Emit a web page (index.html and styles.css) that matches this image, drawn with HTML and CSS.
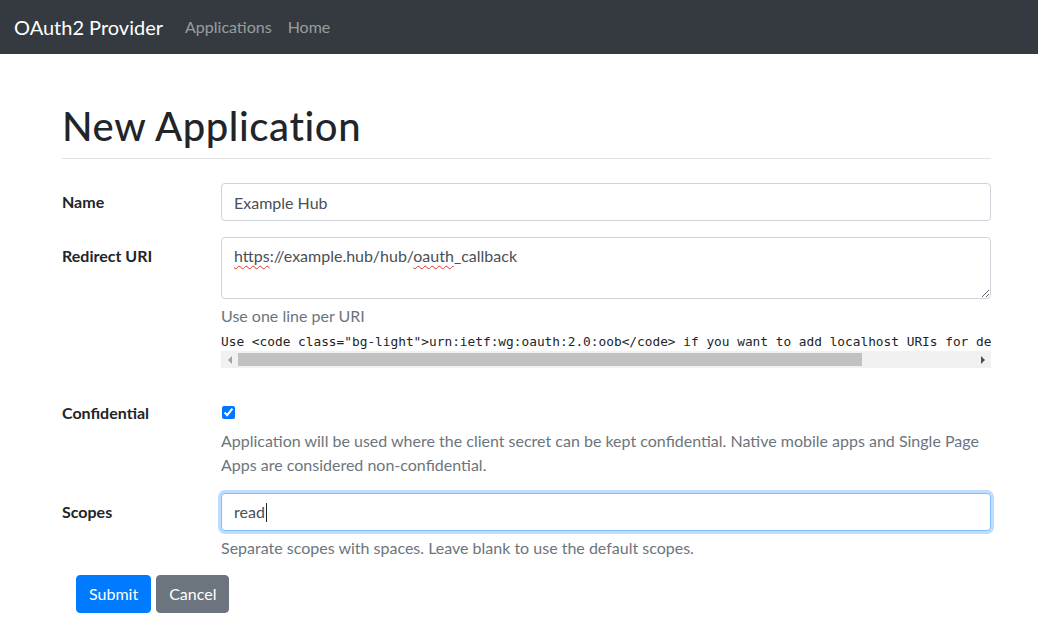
FILE: index.html
```html
<!DOCTYPE html>
<html lang="en">
<head>
<meta charset="utf-8">
<title>New Application</title>
<link rel="stylesheet" href="styles.css">
</head>
<body>
<nav class="navbar">
  <a class="brand" href="#">OAuth2 Provider</a>
  <ul class="nav">
    <li><a class="nav-link" href="#">Applications</a></li>
    <li><a class="nav-link" href="#">Home</a></li>
  </ul>
</nav>
<main class="container">
  <h1 class="title">New Application</h1>
  <form class="app-form">
    <div class="form-row">
      <label class="col-label" for="name">Name</label>
      <div class="col-field">
        <input class="form-control" id="name" type="text" value="Example Hub">
      </div>
    </div>
    <div class="form-row">
      <label class="col-label">Redirect URI</label>
      <div class="col-field">
        <div class="form-control textarea" id="redirect"><span class="misspelt">https</span>://example.hub/hub/<span class="misspelt">oauth</span>_callback</div>
        <div class="help">Use one line per URI</div>
        <div class="code-scroll">
          <pre class="code-line">Use &lt;code class="bg-light"&gt;urn:ietf:wg:oauth:2.0:oob&lt;/code&gt; if you want to add localhost URIs for development purposes.</pre>
          <div class="scrollbar">
            <span class="sb-btn"><span class="arrow-left"></span></span>
            <span class="sb-track"><span class="sb-thumb"></span></span>
            <span class="sb-btn"><span class="arrow-right"></span></span>
          </div>
        </div>
      </div>
    </div>
    <div class="form-row">
      <label class="col-label" for="confidential">Confidential</label>
      <div class="col-field">
        <div class="check-wrap"><input class="check" id="confidential" type="checkbox" checked></div>
        <div class="help">Application will be used where the client secret can be kept confidential. Native mobile apps and Single Page Apps are considered non-confidential.</div>
      </div>
    </div>
    <div class="form-row">
      <label class="col-label">Scopes</label>
      <div class="col-field">
        <div class="form-control focused"><span>read</span><span class="caret"></span></div>
        <div class="help">Separate scopes with spaces. Leave blank to use the default scopes.</div>
      </div>
    </div>
    <div class="actions">
      <button class="btn btn-primary" type="submit">Submit</button>
      <button class="btn btn-secondary" type="button">Cancel</button>
    </div>
  </form>
</main>
</body>
</html>
```
FILE: styles.css
```css
* { box-sizing: border-box; }
html, body { margin: 0; padding: 0; }
body {
  font-family: Lato, "Liberation Sans", sans-serif;
  font-size: 16px;
  line-height: 24px;
  color: #212529;
  background: #fff;
}
.navbar {
  height: 54px;
  background: #343a40;
  display: flex;
  align-items: center;
  padding: 0 14px;
}
.brand {
  color: #fff;
  font-size: 20px;
  line-height: 30px;
  text-decoration: none;
  margin-right: 14px;
}
.nav {
  list-style: none;
  margin: 0;
  padding: 0;
  display: flex;
}
.nav-link {
  display: block;
  padding: 8px;
  color: rgba(255, 255, 255, 0.5);
  text-decoration: none;
}
.container {
  padding: 48px 47px 0 62px;
}
.title {
  font-size: 40px;
  font-weight: 500;
  letter-spacing: 0.6px;
  line-height: 48px;
  margin: 0 0 24px;
  padding-bottom: 8px;
  border-bottom: 1px solid #dee2e6;
}
.form-row {
  display: flex;
  margin-bottom: 16px;
}
.col-label {
  width: 159px;
  flex: none;
  font-weight: 700;
  padding-top: 7px;
  line-height: 24px;
}
.col-field {
  flex: 1;
  min-width: 0;
}
.form-control {
  display: block;
  width: 100%;
  height: 38px;
  padding: 6px 12px;
  font-family: inherit;
  font-size: 16px;
  line-height: 24px;
  color: #495057;
  background: #fff;
  border: 1px solid #ced4da;
  border-radius: 4px;
  margin: 0;
}
.textarea {
  height: 62px;
  resize: vertical;
  overflow: auto;
}
.misspelt {
  text-decoration: underline wavy #e03030;
  text-decoration-thickness: 1px;
  text-underline-offset: 3px;
}
.focused {
  border-color: #80bdff;
  box-shadow: 0 0 0 3px rgba(0, 123, 255, 0.25);
  display: flex;
  align-items: center;
}
.caret {
  display: inline-block;
  width: 1px;
  height: 19px;
  background: #212529;
  margin-left: 1px;
}
.help {
  color: #6c757d;
  margin-top: 5px;
}
.code-scroll {
  margin-top: 4px;
  margin-bottom: 10px;
}
.code-line {
  margin: 0;
  overflow: hidden;
  white-space: pre;
  font-family: "DejaVu Sans Mono", "Liberation Mono", monospace;
  font-size: 12.8px;
  line-height: 19px;
  color: #212529;
}
.scrollbar {
  display: flex;
  height: 17px;
  background: #f1f1f1;
}
.sb-btn {
  width: 17px;
  flex: none;
  display: flex;
  align-items: center;
  justify-content: center;
}
.sb-track {
  flex: 1;
  display: flex;
  align-items: center;
}
.sb-thumb {
  width: 624px;
  height: 13px;
  background: #c1c1c1;
}
.arrow-left {
  width: 0;
  height: 0;
  border-top: 4px solid transparent;
  border-bottom: 4px solid transparent;
  border-right: 4px solid #a3a3a3;
}
.arrow-right {
  width: 0;
  height: 0;
  border-top: 4px solid transparent;
  border-bottom: 4px solid transparent;
  border-left: 4px solid #505050;
}
.check-wrap {
  height: 24px;
  margin-top: 6px;
  display: flex;
  align-items: center;
}
.check {
  margin: 0 0 0 1px;
  width: 13px;
  height: 13px;
}
.actions {
  display: flex;
  gap: 5px;
  padding-left: 14px;
  margin-top: -1px;
}
.btn {
  font-family: inherit;
  font-size: 16px;
  line-height: 24px;
  padding: 6px 12px;
  border: 1px solid transparent;
  border-radius: 4px;
  color: #fff;
}
.btn-primary { background: #007bff; border-color: #007bff; }
.btn-secondary { background: #6c757d; border-color: #6c757d; }
```
